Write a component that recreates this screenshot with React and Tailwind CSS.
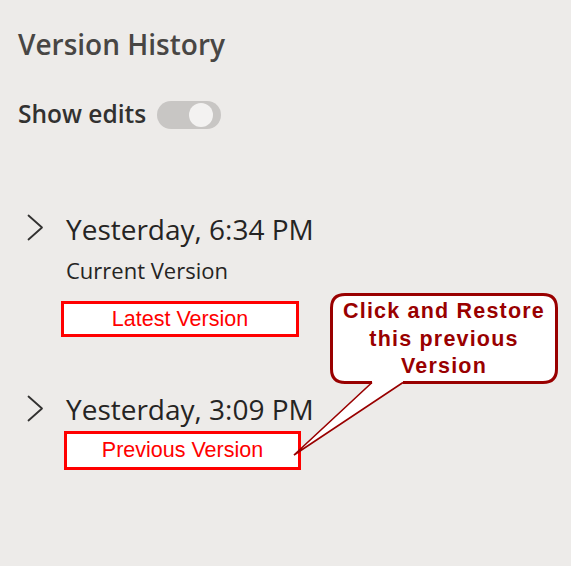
import React from "react";

function Chevron() {
  return (
    <svg width="17" height="27" viewBox="0 0 17 27" className="block">
      <path d="M1.5 1.5 L15 13.5 L1.5 25.5" fill="none" stroke="#323130" strokeWidth="1.8" strokeLinecap="round" strokeLinejoin="round" />
    </svg>
  );
}

export default function App() {
  const seg = { fontFamily: '"Open Sans", "Noto Sans", sans-serif' };
  const arial = { fontFamily: '"Liberation Sans", Arial, sans-serif' };
  return (
    <div className="relative w-[571px] h-[566px] overflow-hidden bg-[#edebe9] pt-[26px] pl-[18px]" style={seg}>
      <h1 className="text-[28px] leading-[36px] font-semibold text-[#484644]">Version History</h1>

      <div className="mt-[39px] flex items-start gap-[11px]">
        <span className="text-[24.5px] leading-[25px] font-semibold text-[#323130]">Show edits</span>
        <div className="w-[64px] h-[28px] rounded-full bg-[#c8c6c4] flex items-center justify-end pr-[8px]">
          <div className="w-[24px] h-[24px] rounded-full bg-[#f3f2f1]" />
        </div>
      </div>

      <div className="mt-[82px] flex pl-[9px]">
        <div className="w-[39px] pt-[3px]">
          <Chevron />
        </div>
        <div className="flex flex-col">
          <div className="text-[28px] leading-[36px] text-[#252423]">Yesterday, 6:34 PM</div>
          <div className="mt-[9px] text-[22px] leading-[28px] text-[#252423]">Current Version</div>
          <div
            className="mt-[17px] -ml-[5px] w-[238px] h-[36px] border-[3px] border-[#ff0000] bg-white flex items-center justify-center text-[21.5px] text-[#ff0000]"
            style={arial}
          >
            Latest Version
          </div>
        </div>
      </div>

      <div className="mt-[54px] flex pl-[9px]">
        <div className="w-[39px] pt-[4px]">
          <Chevron />
        </div>
        <div className="flex flex-col">
          <div className="text-[28px] leading-[36px] text-[#252423]">Yesterday, 3:09 PM</div>
          <div
            className="mt-[4px] -ml-[2px] w-[237px] h-[39px] border-[3px] border-[#ff0000] bg-white flex items-center justify-center text-[21.5px] text-[#ff0000]"
            style={arial}
          >
            Previous Version
          </div>
        </div>
      </div>

      {/* Callout overlay */}
      <svg
        className="absolute left-[280px] top-[280px]"
        width="291"
        height="200"
        viewBox="280 280 291 200"
      >
        <path
          d="M345 294.5 H543 Q556.5 294.5 556.5 308 V369 Q556.5 382.5 543 382.5 H403 L294 455 L372 382.5 H345 Q331.5 382.5 331.5 369 V308 Q331.5 294.5 345 294.5 Z"
          fill="#ffffff"
          stroke="none"
        />
        <path
          d="M403 382.5 H543 Q556.5 382.5 556.5 369 V308 Q556.5 294.5 543 294.5 H345 Q331.5 294.5 331.5 308 V369 Q331.5 382.5 345 382.5 H372"
          fill="none"
          stroke="#990000"
          strokeWidth="3"
        />
        <path d="M372 382.5 L294 455 L403 382.5" fill="none" stroke="#990000" strokeWidth="1.6" strokeLinejoin="miter" />
      </svg>
      <div
        className="absolute left-[330px] top-[293px] w-[228px] pt-[5px] text-center text-[21.5px] leading-[27.5px] font-bold text-[#990000] tracking-[1.2px]"
        style={arial}
      >
        Click and Restore
        <br />
        this previous
        <br />
        Version
      </div>
    </div>
  );
}
